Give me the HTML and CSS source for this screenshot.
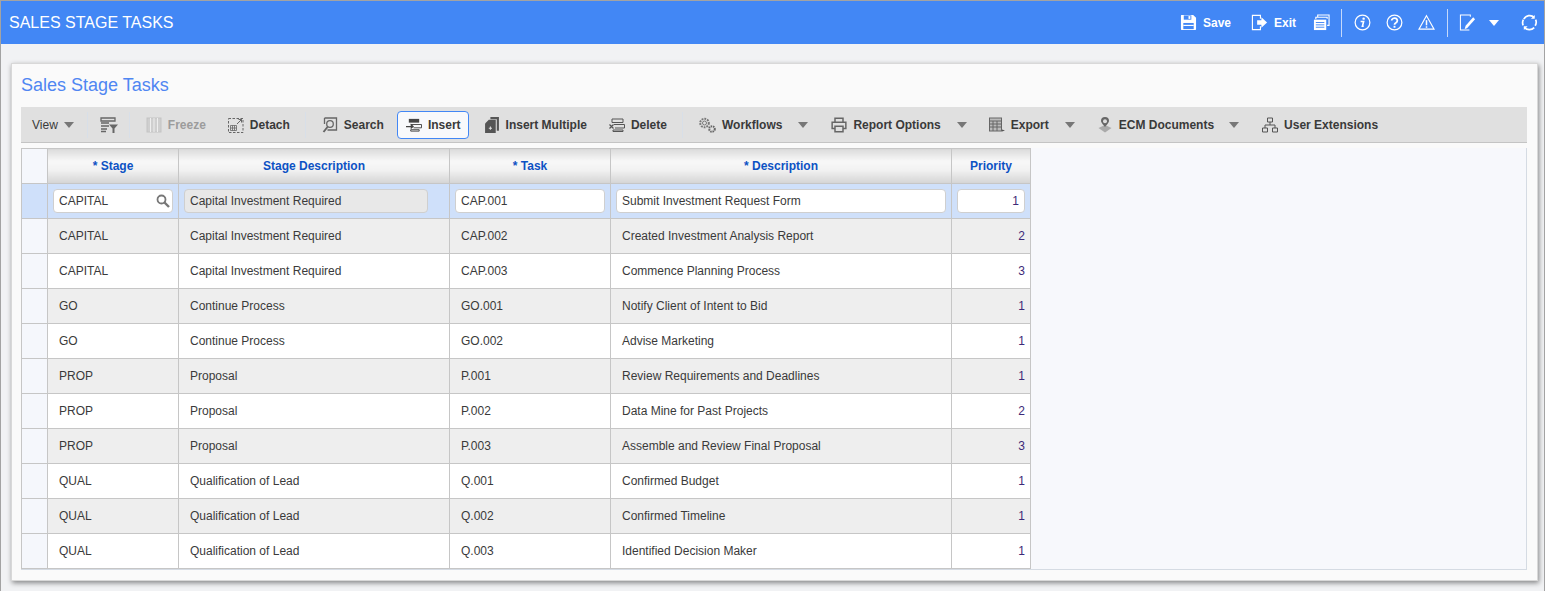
FILE: index.html
```html
<!DOCTYPE html>
<html lang="en">
<head>
    <meta charset="UTF-8">
    <meta name="viewport" content="width=device-width, initial-scale=1.0">
    <title>Sales Stage Tasks</title>
    <link rel="stylesheet" href="styles.css">
</head>
<body>

<header class="app-bar">
    <div class="app-title">SALES STAGE TASKS</div>
    <div class="app-actions">
        <span class="app-btn save-btn">
            <svg class="app-icon" viewBox="0 0 18 18"><path d="M1.5 1h12.5l3 3v12.2a.8.8 0 0 1-.8.8H1.8a.8.8 0 0 1-.8-.8V1.800a.8.8 0 0 1 .5-.8z" fill="#fff"/><rect x="4" y="1.500" width="8" height="4.500" fill="#4287f5"/><rect x="9" y="2.200" width="2" height="3" fill="#fff"/><rect x="3.500" y="9.500" width="11" height="6.500" fill="#4287f5"/><rect x="3.500" y="11.500" width="11" height="1.200" fill="#fff"/></svg>
            Save
        </span>
        <span class="app-btn exit-btn">
            <svg class="app-icon" viewBox="0 0 18 18"><path d="M10 5V1.500H1.500v15H10V13" fill="none" stroke="#fff" stroke-width="1.200"/><path d="M6.500 6.500h4.500V3.500l6 5.500-6 5.500v-3H6.500z" fill="#fff"/></svg>
            Exit
        </span>
        <svg class="app-icon notes-icon" viewBox="0 0 18 18"><path d="M5 3V1h12v11h-2M3 5.500V3.500h12v1.500" fill="none" stroke="#fff" stroke-width="1.200"/><rect x="1" y="6" width="13" height="11" fill="#fff"/><path d="M3 9h9M3 11.500h9M3 14h9" stroke="#4287f5" stroke-width="1"/></svg>
        <span class="app-sep"></span>
        <svg class="app-icon info-icon" viewBox="0 0 18 18"><circle cx="9" cy="9" r="7.800" fill="none" stroke="#fff" stroke-width="1.300"/><circle cx="10.200" cy="4.900" r="1.300" fill="#fff"/><path d="M7 8h3.200l-1.300 5h1.400" fill="none" stroke="#fff" stroke-width="1.700"/></svg>
        <svg class="app-icon help-icon" viewBox="0 0 18 18"><circle cx="9" cy="9" r="7.800" fill="none" stroke="#fff" stroke-width="1.300"/><path d="M6 7a3 2.700 0 1 1 4.600 2.300C9.500 10 9 10.500 9 11.500" fill="none" stroke="#fff" stroke-width="1.900"/><rect x="8" y="12.500" width="2" height="2" fill="#fff"/></svg>
        <svg class="app-icon warn-icon" viewBox="0 0 18 18"><path d="M9 1.800L17 16H1z" fill="none" stroke="#fff" stroke-width="1.200"/><path d="M9 6.500v5.500" stroke="#fff" stroke-width="1.600"/><rect x="8.200" y="13" width="1.600" height="1.600" fill="#fff"/></svg>
        <span class="app-sep sep-two"></span>
        <svg class="app-icon edit-icon" viewBox="0 0 18 18"><path d="M12 3V1H1.500v16H11" fill="none" stroke="#fff" stroke-width="1.100"/><path d="M6 16l1-3.500L15 3.500l2 2-8.500 9.500z" fill="#fff"/></svg>
        <span class="app-caret"></span>
        <svg class="app-icon refresh-icon" viewBox="0 0 18 18"><path d="M3 5.500A7 7 0 0 1 14 3.500M15.500 6A7 7 0 0 1 15 12.500M14 14.500A7 7 0 0 1 3.500 14M2.300 12A7 7 0 0 1 2.500 6" fill="none" stroke="#fff" stroke-width="1.800"/><path d="M14.500 1v4h-4zM3 17v-4h4z" fill="#fff"/></svg>
    </div>
</header>

<main class="page">
    <section class="card">
        <h1 class="card-title">Sales Stage Tasks</h1>

        <div class="toolbar">
            <span class="tool view-tool">View<i class="caret"></i></span>
            <span class="tool-sep sep-a"></span>
            <span class="tool filter-tool">
                <svg class="tool-icon" viewBox="0 0 18 16"><path d="M1 1h14v3H1zM1 6h8M1 9h8M1 12h6M1 14.500h5" fill="none" stroke="#666" stroke-width="1.300"/><path d="M9 7.500h9l-3.500 4V16h-2v-4.500z" fill="#666"/></svg>
            </span>
            <span class="tool-sep sep-b"></span>
            <span class="tool is-off freeze-tool">
                <svg class="tool-icon" viewBox="0 0 15 16"><rect x=".5" y="1" width="14" height="14" fill="#cfcfcf" stroke="#c4c4c4"/><path d="M4 1v14M7.500 1v14M11 1v14" stroke="#eee" stroke-width="1"/></svg>
                Freeze
            </span>
            <span class="tool detach-tool">
                <svg class="tool-icon" viewBox="0 0 16 16"><rect x=".5" y="1.500" width="14.500" height="14" fill="none" stroke="#666" stroke-dasharray="2.500 1.500"/><path d="M9 7l4.500-4.500M10.500 2.500h3v3" fill="none" stroke="#666"/><path d="M2.500 8.500h6v5h-6zM4.500 8.500v5M6.500 8.500v5M2.500 11h6" fill="none" stroke="#666" stroke-width=".8"/></svg>
                Detach
            </span>
            <span class="tool-sep sep-c"></span>
            <span class="tool search-tool">
                <svg class="tool-icon" viewBox="0 0 15 16"><path d="M2 1h12v12H5" fill="none" stroke="#666" stroke-width="1.300"/><path d="M2 1v6" stroke="#666" stroke-width="1.300"/><circle cx="7.500" cy="7" r="3.300" fill="none" stroke="#666" stroke-width="1.300"/><path d="M5 10l-4 5" stroke="#666" stroke-width="2"/></svg>
                Search
            </span>
            <span class="tool insert-tool">
                <svg class="tool-icon" viewBox="0 0 17 14"><rect x="3" y=".5" width="11" height="4" fill="#444"/><path d="M5 6.500h11.500v3.500H8M5 12h9v1.500H5z" fill="none" stroke="#444"/><path d="M0 8h5V5.500L8.500 8.500 5 11.500V9.500H0z" fill="#444"/></svg>
                Insert
            </span>
            <span class="tool multi-tool">
                <svg class="tool-icon" viewBox="0 0 13 15"><path d="M5 0h8v13h-2V2H5z" fill="#555"/><path d="M3.500 2.500H10V15H0V6z" fill="#555"/><path d="M3.500 10.500h3M5 9v3" stroke="#ddd"/></svg>
                Insert Multiple
            </span>
            <span class="tool delete-tool">
                <svg class="tool-icon" viewBox="0 0 16 14"><path d="M3 1h11v3.500H3zM5 6.500h10.500V10H6M4 12h10v1.500H4z" fill="none" stroke="#555"/><path d="M.5 6.500l4 4M4.500 6.500l-4 4" stroke="#555" stroke-width="1.200"/></svg>
                Delete
            </span>
            <span class="tool-sep sep-d"></span>
            <span class="tool flow-tool">
                <svg class="tool-icon" viewBox="0 0 18 16"><circle cx="6.500" cy="6" r="4.300" fill="none" stroke="#777" stroke-width="2" stroke-dasharray="1.800 1"/><circle cx="6.500" cy="6" r="2" fill="none" stroke="#777"/><circle cx="14" cy="12" r="2.800" fill="none" stroke="#666" stroke-width="2" stroke-dasharray="1.500 .8"/></svg>
                Workflows
            </span>
            <i class="caret flow-caret"></i>
            <span class="tool report-tool">
                <svg class="tool-icon" viewBox="0 0 14 14"><path d="M3.500 4.500V1h7v3.500M3.500 10H1V4.500h12V10h-2.500M3.500 8h7v5h-7z" fill="none" stroke="#666" stroke-width="1.300"/></svg>
                Report Options
            </span>
            <i class="caret report-caret"></i>
            <span class="tool export-tool">
                <svg class="tool-icon" viewBox="0 0 16 15"><rect x=".5" y=".5" width="12" height="13" fill="#bbb" stroke="#666"/><path d="M.5 3.500h12M.5 6.500h12M.5 9.500h12M4 3.500v10M8 3.500v10" stroke="#666"/><path d="M10 10l3 2 3 1-3 1v-2z" fill="#555"/></svg>
                Export
            </span>
            <i class="caret export-caret"></i>
            <span class="tool ecm-tool">
                <svg class="tool-icon" viewBox="0 0 15 16"><path d="M1 11l6.500-3 6.500 3-6.500 4.500z" fill="#aaa"/><path d="M7.500 10C4 6 3.500 4.500 3.500 4a4 4 0 0 1 8 0c0 .5-.5 2-4 6z" fill="#666"/><circle cx="7.500" cy="4.200" r="2" fill="#ddd"/></svg>
                ECM Documents
            </span>
            <i class="caret ecm-caret"></i>
            <span class="tool ext-tool">
                <svg class="tool-icon" viewBox="0 0 16 15"><path d="M5.500 .5h5v4h-5zM.5 10.500h5v4h-5zM10.500 10.500h5v4h-5zM8 4.500v3M3 10.500v-3h10v3" fill="none" stroke="#555"/></svg>
                User Extensions
            </span>
        </div>

        <div class="grid-area">
            <table class="grid">
                <thead>
                    <tr>
                        <th class="row-head"></th>
                        <th class="col-stage">* Stage</th>
                        <th class="col-desc">Stage Description</th>
                        <th class="col-task">* Task</th>
                        <th class="col-text">* Description</th>
                        <th class="col-priority">Priority</th>
                    </tr>
                </thead>
                <tbody>
                    <tr class="active">
                        <td class="row-head"></td>
                        <td>
                            <div class="field lookup">CAPITAL
                                <svg class="lookup-icon" viewBox="0 0 14 14"><circle cx="5.500" cy="5.500" r="4" fill="none" stroke="#777" stroke-width="1.800"/><path d="M8.500 8.500l4.500 4.500" stroke="#777" stroke-width="2.400"/></svg>
                            </div>
                        </td>
                        <td><div class="field readonly">Capital Investment Required</div></td>
                        <td><div class="field">CAP.001</div></td>
                        <td><div class="field">Submit Investment Request Form</div></td>
                        <td><div class="field number">1</div></td>
                    </tr>
                    <tr><td class="row-head"></td><td>CAPITAL</td><td>Capital Investment Required</td><td>CAP.002</td><td>Created Investment Analysis Report</td><td class="number">2</td></tr>
                    <tr><td class="row-head"></td><td>CAPITAL</td><td>Capital Investment Required</td><td>CAP.003</td><td>Commence Planning Process</td><td class="number">3</td></tr>
                    <tr><td class="row-head"></td><td>GO</td><td>Continue Process</td><td>GO.001</td><td>Notify Client of Intent to Bid</td><td class="number">1</td></tr>
                    <tr><td class="row-head"></td><td>GO</td><td>Continue Process</td><td>GO.002</td><td>Advise Marketing</td><td class="number">1</td></tr>
                    <tr><td class="row-head"></td><td>PROP</td><td>Proposal</td><td>P.001</td><td>Review Requirements and Deadlines</td><td class="number">1</td></tr>
                    <tr><td class="row-head"></td><td>PROP</td><td>Proposal</td><td>P.002</td><td>Data Mine for Past Projects</td><td class="number">2</td></tr>
                    <tr><td class="row-head"></td><td>PROP</td><td>Proposal</td><td>P.003</td><td>Assemble and Review Final Proposal</td><td class="number">3</td></tr>
                    <tr><td class="row-head"></td><td>QUAL</td><td>Qualification of Lead</td><td>Q.001</td><td>Confirmed Budget</td><td class="number">1</td></tr>
                    <tr><td class="row-head"></td><td>QUAL</td><td>Qualification of Lead</td><td>Q.002</td><td>Confirmed Timeline</td><td class="number">1</td></tr>
                    <tr><td class="row-head"></td><td>QUAL</td><td>Qualification of Lead</td><td>Q.003</td><td>Identified Decision Maker</td><td class="number">1</td></tr>
                </tbody>
            </table>
        </div>
    </section>
</main>

</body>
</html>
```

FILE: styles.css
```css
* {
    box-sizing: border-box;
}
html, body {
    margin: 0;
    height: 591px;
    overflow: hidden;
}
body {
    font-family: "Liberation Sans", Arial, sans-serif;
    font-size: 12px;
    color: #3a3a3a;
    background-color: #f1f2f4;
    border: 1px solid #a3a3a3;
    border-bottom: 0;
    display: flex;
    flex-direction: column;
}

/* top blue bar */
.app-bar {
    height: 43px;
    flex: none;
    background-color: #4287f5;
    color: #fff;
    display: flex;
    align-items: center;
    justify-content: space-between;
    padding: 0 6px 0 8px;
}
.app-title {
    font-size: 16px;
}
.app-actions {
    display: flex;
    align-items: center;
    font-weight: bold;
}
.app-btn {
    display: flex;
    align-items: center;
    gap: 6px;
}
.app-icon {
    width: 17px;
    height: 17px;
    flex: none;
}
.exit-btn {
    margin-left: 20px;
}
.notes-icon {
    margin-left: 17px;
}
.app-sep {
    width: 1px;
    height: 28px;
    background-color: #c5d9fb;
    margin: 0 12px 0 11px;
}
.help-icon, .warn-icon {
    margin-left: 15px;
}
.sep-two {
    margin-left: 12px;
    margin-right: 11px;
}
.app-caret {
    width: 0;
    height: 0;
    border-left: 5px solid transparent;
    border-right: 5px solid transparent;
    border-top: 6px solid #fff;
    margin: 0 22px 0 13px;
}

/* card */
.page {
    flex: 1;
    padding: 19px 6px 10px 10px;
    display: flex;
}
.card {
    flex: 1;
    background-color: #fafafa;
    border: 1px solid #d8d8d8;
    box-shadow: 1px 2px 5px rgba(0, 0, 0, 0.45);
    padding: 0 10px 10px 9px;
    display: flex;
    flex-direction: column;
}
.card-title {
    margin: 0;
    height: 43px;
    line-height: 43px;
    font-size: 18px;
    font-weight: normal;
    color: #4f86f2;
}

/* toolbar */
.toolbar {
    height: 36px;
    flex: none;
    background-color: #e0e0e0;
    border-bottom: 1px solid #c4c4c4;
    display: flex;
    align-items: center;
    font-weight: bold;
    color: #3a3a3a;
    white-space: nowrap;
}
.tool {
    display: flex;
    align-items: center;
    gap: 6px;
}
.tool-icon {
    width: 16px;
    height: 16px;
    flex: none;
}
.is-off {
    color: #9c9c9c;
}
.tool-sep {
    width: 1px;
    height: 26px;
    background-color: #d8dfe8;
}
.caret {
    width: 0;
    height: 0;
    border-left: 5px solid transparent;
    border-right: 5px solid transparent;
    border-top: 6px solid #777;
    display: inline-block;
}
.view-tool {
    font-weight: normal;
    margin-left: 11px;
}
.sep-a { margin-left: 13px; }
.filter-tool { margin-left: 12px; }
.filter-tool .tool-icon { width: 18px; }
.sep-b { margin-left: 11px; }
.freeze-tool { margin-left: 16px; }
.detach-tool { margin-left: 22px; }
.sep-c { margin-left: 15px; }
.search-tool { margin-left: 16px; }
.insert-tool {
    margin-left: 13px;
    height: 28px;
    padding: 0 7px 0 8px;
    background-color: #f8f9fb;
    border: 1px solid #4287f5;
    border-radius: 4px;
}
.multi-tool { margin-left: 15px; }
.delete-tool { margin-left: 22px; }
.sep-d { margin-left: 15px; }
.flow-tool { margin-left: 15px; }
.flow-tool .tool-icon { width: 18px; }
.flow-caret { margin-left: 16px; }
.report-tool { margin-left: 23px; }
.report-caret { margin-left: 16px; }
.export-tool { margin-left: 22px; }
.export-caret { margin-left: 16px; }
.ecm-tool { margin-left: 22px; }
.ecm-caret { margin-left: 15px; }
.ext-tool { margin-left: 23px; }

/* grid */
.grid-area {
    flex: 1;
    margin-top: 5px;
    background-color: #f7f8fc;
    border-right: 1px solid #d5dbe3;
    border-bottom: 1px solid #d5dbe3;
}
.grid {
    border-collapse: collapse;
    table-layout: fixed;
    width: 1010px;
}
.grid th, .grid td {
    border: 1px solid #c6c6c6;
    height: 35px;
    padding: 0 5px 0 11px;
    overflow: hidden;
    white-space: nowrap;
}
.grid th {
    padding: 0 5px;
    color: #0d52c4;
    font-weight: bold;
    text-align: center;
    background: linear-gradient(#dcdcdc, #f8f8f8 35%, #f2f2f2 60%, #d4d4d4);
}
.grid th.row-head, .grid td.row-head {
    width: 26px;
    background: #f5f7fc;
    padding: 0;
}
.col-stage { width: 131px; }
.col-desc { width: 271px; }
.col-task { width: 161px; }
.col-text { width: 341px; }
.col-priority { width: 79px; }
.grid td.number {
    text-align: right;
    color: #3d2a78;
}
.grid tbody tr:nth-child(even) td {
    background-color: #eeeeee;
}
.grid tbody tr:nth-child(odd) td {
    background-color: #fff;
}
.grid tbody tr.active td {
    background-color: #cfe0fa;
    padding: 0 5px;
}
.grid td.row-head, .grid tbody tr td.row-head {
    background-color: #f5f7fc;
}
.grid tbody tr.active td.row-head {
    background-color: #cfe0fa;
}

/* inputs of the active row */
.field {
    height: 24px;
    line-height: 22px;
    background-color: #fff;
    border: 1px solid #cfcfcf;
    border-radius: 4px;
    padding: 0 5px;
}
.readonly {
    background-color: #e8e8e8;
    margin-right: 16px;
}
.number {
    text-align: right;
    color: #3d2a78;
}
.lookup {
    display: flex;
    align-items: center;
    justify-content: space-between;
    padding-right: 2px;
}
.lookup-icon {
    width: 14px;
    height: 14px;
}
```
